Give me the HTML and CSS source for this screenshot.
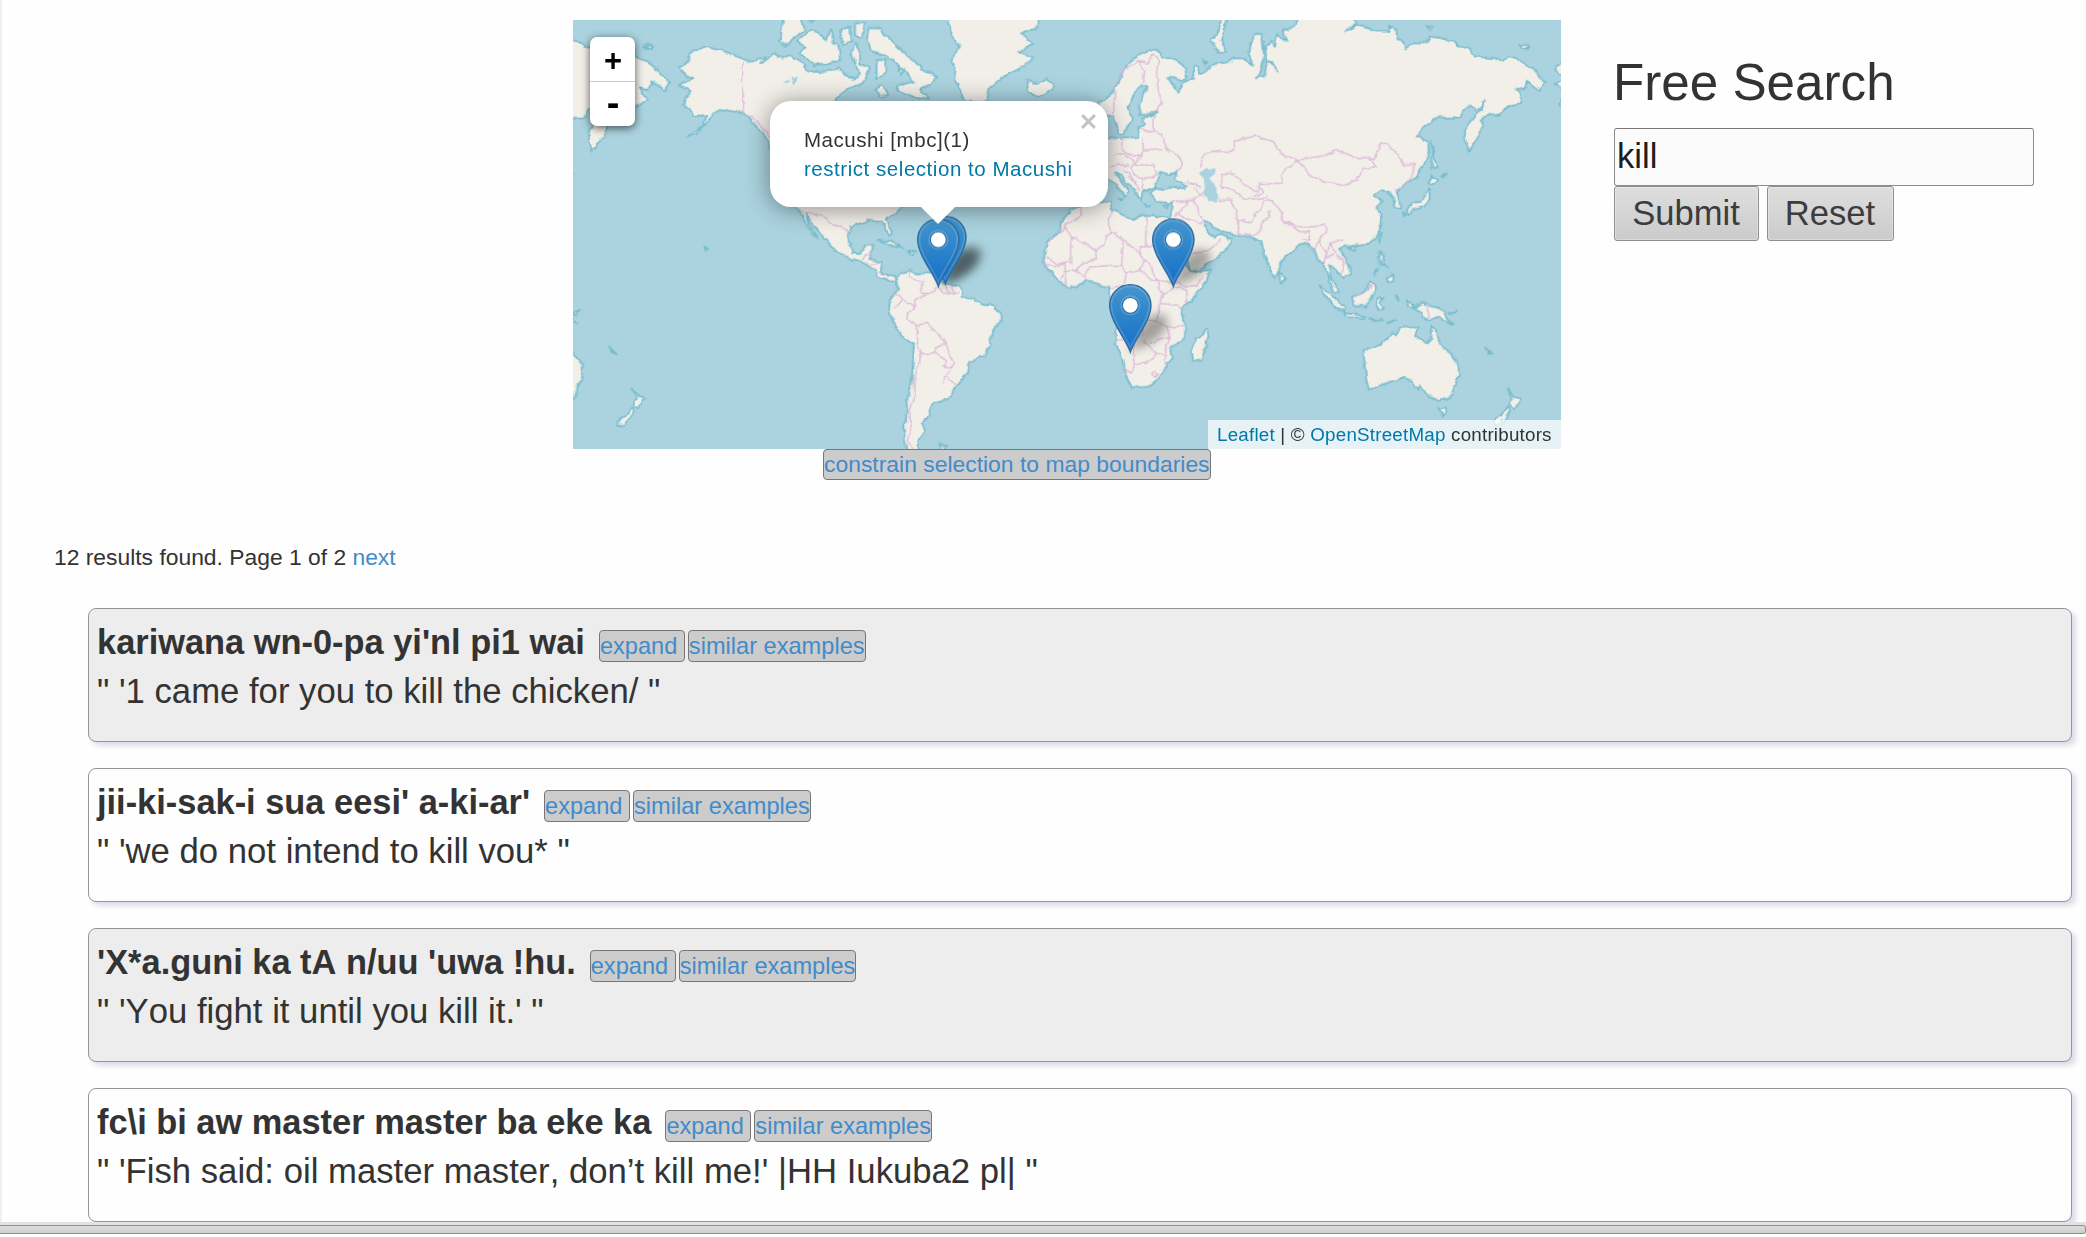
FILE: index.html
```html
<!DOCTYPE html>
<html lang="en">
<head>
<meta charset="utf-8">
<title>Free Search</title>
<link rel="stylesheet" href="styles.css">
</head>
<body>
<main class="page">
  <div class="top">
    <section class="map-column">
      <div class="map">
        <svg class="map-canvas" viewBox="39 30 2964 1287" preserveAspectRatio="none" aria-hidden="true">
          <defs>
            <filter id="rough" filterUnits="userSpaceOnUse" x="-100" y="0" width="3300" height="1350" color-interpolation-filters="sRGB">
              <feTurbulence type="fractalNoise" baseFrequency="0.035" numOctaves="3" seed="4" result="n"/>
              <feDisplacementMap in="SourceGraphic" in2="n" scale="17" xChannelSelector="R" yChannelSelector="G"/>
            </filter>
            <filter id="soft" x="-50%" y="-50%" width="200%" height="200%"><feGaussianBlur stdDeviation="15"/></filter>
            <linearGradient id="pin" x1="0" y1="0" x2="0" y2="1">
              <stop offset="0" stop-color="#4596cd"/><stop offset="1" stop-color="#126fc6"/>
            </linearGradient>
            <g id="world">
              <g class="land">
                <path d="M435 110L480 120 545 145 575 155 615 140 600 160 645 130 665 145 690 135 720 155 740 180 800 185 835 175 855 195 890 205 900 190 875 130 885 100 900 120 900 160 930 175 920 200 900 225 870 230 845 250 830 270 830 420 1060 570 1020 595 1000 610 980 625 993 665 985 672 965 635 925 632 870 650 865 690 880 730 900 732 915 708 940 705 935 728 925 750 965 755 965 785 985 800 1005 795 1012 812 985 815 955 800 945 780 905 755 875 745 840 730 810 710 800 690 770 655 735 612 750 650 773 685 755 670 735 635 715 600 700 580 640 450 625 400 610 370 580 340 560 315 530 305 480 300 460 310 440 340 410 370 380 382 430 345 440 315 400 318 390 295 370 285 375 270 395 240 355 225 400 205 370 190 360 170 385 155 390 130 410 120Z"/>
                <path d="M930 55L960 55 980 80 1010 105 1050 145 1095 180 1130 200 1110 225 1080 235 1105 270 1060 260 1010 240 1020 225 1060 215 1030 180 1000 150 970 130 930 120 920 90Z"/>
                <path d="M740 70L760 60 800 90 810 60 820 95 835 105 840 150 800 160 760 165 720 130 735 110 710 95Z"/>
                <path d="M670 20L720 20 735 60 700 80 680 110 660 95Z"/>
                <path d="M840 60L870 50 875 95 850 105ZM885 40L915 40 905 80 885 75ZM950 150L980 150 975 190 950 210ZM945 240L965 225 985 255 960 260ZM1015 175L1030 180 1022 195ZM735 20L770 20 755 34Z"/>
                <path d="M1160 20L1180 80 1200 110 1175 150 1190 180 1185 210 1205 250 1215 275 1280 275 1290 230 1330 200 1390 170 1420 140 1375 125 1420 100 1380 70 1425 60 1440 20Z"/>
                <path d="M1400 210L1430 220 1460 205 1480 225 1470 245 1430 260 1405 245Z"/>
                <path d="M250 108L270 102 280 110 258 118ZM955 693L990 693 1030 715 1000 710ZM1040 720L1070 727 1060 735ZM433 712L447 718 440 724ZM1135 1305L1160 1308 1145 1318Z"/>
                <path d="M1010 810L1025 785 1050 778 1065 790 1120 790 1150 820 1195 825 1210 860 1250 875 1290 885 1322 905 1322 930 1295 965 1290 1005 1275 1035 1228 1055 1225 1085 1190 1130 1160 1170 1120 1180 1105 1200 1110 1215 1085 1240 1095 1260 1075 1290 1075 1330 1040 1330 1030 1250 1045 1200 1042 1170 1055 1120 1062 1000 1025 980 1000 935 987 905 990 870 1012 840Z"/>
                <g transform="translate(1500 0)">
                  <path d="M118 280L155 250 175 225 190 180 215 150 245 130 270 120 300 125 305 140 345 150 375 175 380 200 365 213 330 200 325 207 345 235 355 245 375 215 400 205 400 170 415 170 420 190 460 165 500 160 520 145 550 145 580 168 565 130 570 100 585 72 605 72 610 110 612 150 600 190 590 205 612 200 620 155 640 155 650 185 645 165 620 150 615 110 630 90 645 110 650 75 680 95 665 60 700 50 712 40 712 20 880 20 890 38 860 65 890 45 960 65 985 65 990 50 1010 60 1010 85 1030 95 1035 115 1060 100 1095 100 1110 80 1150 85 1180 95 1200 110 1230 115 1245 140 1310 145 1330 155 1350 138 1380 150 1410 170 1430 195 1460 215 1440 240 1400 215 1395 240 1370 235 1388 275 1350 290 1320 310 1280 315 1265 330 1270 350 1255 380 1240 400 1225 428 1215 390 1215 360 1235 330 1260 300 1275 275 1250 300 1235 290 1210 300 1200 322 1120 325 1070 380 1105 395 1105 430 1090 470 1060 510 1030 520 1010 550 1020 580 1020 595 1005 590 1000 565 985 545 965 540 945 555 940 560 965 570 945 590 960 610 965 640 955 670 930 700 890 705 870 715 855 705 840 715 845 730 870 770 870 790 850 805 845 795 830 785 810 765 805 790 830 835 835 850 820 845 805 800 795 790 790 755 770 750 760 720 745 700 720 705 690 730 660 755 660 790 645 805 630 780 615 740 605 700 590 690 575 680 540 675 500 670 480 665 460 650 440 635 430 635 440 660 460 680 485 675 515 690 500 715 470 745 430 770 395 785 385 760 365 720 345 670 332 640 330 625 340 580 290 575 270 550 290 540 330 530 375 535 380 525 345 510 350 485 330 495 300 485 285 520 290 535 260 540 250 545 245 570 235 565 220 535 200 520 185 495 165 490 180 510 205 540 195 560 175 530 150 510 135 500 100 480 100 390 150 385 230 385 235 370 235 350 255 345 250 325 290 310 240 315 235 290 260 235 245 225 215 265 205 290 215 330 190 375 175 370 160 320 130 320 115 300Z"/>
                  <path d="M60 590L150 572 155 600 200 620 220 630 240 615 280 615 325 625 335 655 340 680 360 720 380 770 395 785 450 780 440 810 410 850 375 890 365 905 375 930 375 985 330 1015 335 1045 315 1075 290 1110 265 1130 215 1135 205 1110 190 1070 185 1040 165 1000 170 960 165 930 150 850 145 830 125 830 110 820 80 815 50 830 20 832 -5 810 -40 775 -48 750 -40 695 0 660 10 630 30 600Z"/>
                  <path d="M440 955L445 975 425 1050 400 1055 395 1025 405 985 425 975ZM665 790L675 805 665 820 658 808ZM1137 1193L1162 1193 1150 1218Z"/>
                  <path d="M910 1025L960 1005 980 985 1000 970 1010 975 1020 955 1045 950 1075 955 1065 975 1100 1000 1110 990 1115 945 1130 965 1140 1005 1170 1030 1195 1065 1197 1095 1180 1135 1170 1165 1135 1172 1105 1160 1080 1125 1075 1140 1055 1115 1030 1105 990 1115 960 1130 925 1138 920 1120 915 1070Z"/>
                  <path d="M1040 870L1065 890 1085 878 1120 890 1150 905 1165 925 1180 942 1150 930 1130 920 1110 930 1085 920 1085 905 1065 895 1045 890ZM1165 910L1190 897 1175 915ZM875 860L905 850 935 815 945 830 930 870 920 890 885 885ZM778 825L810 850 850 890 850 905 820 885 790 850ZM850 910L880 912 915 922 910 928 860 920ZM925 928L965 930 940 934ZM980 940L1003 927 990 938ZM950 865L975 865 958 878 972 895 955 900 948 890Z"/>
                  <path d="M955 725L968 735 965 760 985 775 960 765ZM980 805L1000 795 1000 815 985 817ZM945 785L955 775 948 793ZM1010 855L1015 870 1008 862ZM1105 520L1115 495 1140 510 1120 522ZM1040 600L1060 583 1085 573 1110 535 1112 565 1095 590 1060 600 1045 612ZM1028 603L1038 610 1034 622ZM1115 395L1122 440 1130 475 1116 478ZM955 680L965 670 960 697ZM868 712L885 712 880 724ZM1145 495L1165 487 1152 499Z"/>
                  <path d="M1340 1135L1360 1158 1383 1163 1362 1195 1350 1185 1355 1165ZM1345 1190L1350 1205 1320 1245 1300 1248 1300 1235 1325 1215ZM1275 1012L1298 1032 1285 1028ZM490 20L475 60 455 95 475 125 500 125 482 95 490 60 505 20ZM1380 112L1405 104 1400 118ZM1100 48L1120 50 1112 60ZM432 152L442 156 438 166ZM250 578L272 588 258 590ZM310 590L328 584 322 595ZM175 566L190 568 180 574Z"/>
                </g>
              </g>
              <g class="lake">
                <path d="M1920 490L1940 475 1967 475 1965 490 1950 505 1968 525 1972 575 1945 573 1932 550 1938 530ZM690 200L715 200 700 225ZM668 215L690 210 680 220Z"/>
              </g>
              <g class="border">
                <path d="M547 145V305L580 325 610 355 635 390M715 605L755 612 800 625 825 645 845 645 865 670M905 755L915 735 935 730M925 770L960 755M955 785L975 795M1050 778L1045 800 1085 820 1085 850 1110 850 1135 830M1000 855L1030 865 1065 890 1070 865 1110 850M1000 895L1030 865M1065 890L1045 905 1040 930 1070 945 1100 940 1135 970 1155 1000 1125 1015 1125 1030 1085 1030 1072 1000 1072 945M1085 1030L1075 1060 1062 1110 1062 1170 1050 1200 1050 1260 1045 1300 1060 1317M1125 1030L1160 1050 1150 1072 1175 1075 1185 1060 1165 1030 1155 1000M1175 1075L1158 1095 1150 1120M1158 1095L1190 1130M1135 830L1150 850 1175 850 1195 850M1160 825L1165 850M1175 825L1178 850"/>
                <g transform="translate(1500 0)">
                  <path d="M160 320L165 230 190 180 235 152 250 180 248 220M235 152L265 160 275 135 295 150 290 185 295 240 305 275 285 310M282 315L282 365 255 365 235 350M282 365L305 375 310 400 330 425 370 450 365 475 350 485M185 385L185 420 215 435 245 440 250 385M250 420L310 415M245 440L225 460 240 465 280 465 290 490 250 510 230 500 210 470 225 460M165 440L190 430 225 455M150 470L180 465 205 465M190 480L210 490 235 540M250 510L245 540M205 500L225 520M380 515L425 530M400 535L430 560M340 575L400 570 430 545M385 570L355 610 340 620M400 570L420 610 430 640M355 610L390 630 425 640M420 450L455 420 490 430 520 420 520 395 585 378 640 395 665 430 715 450 665 490 665 520 600 520 590 545 555 530 520 490 485 490 485 530M420 450L425 470M485 530L510 535 560 570 625 560M475 570L515 570 530 600 530 640 540 670M530 630L570 635 600 600 610 575 635 570M540 670L595 675 610 640 630 600M590 525L610 545 580 560M635 570L660 600 665 630 710 650 770 650 790 640 800 665 770 695 760 720M715 450L800 435 830 420 895 450 925 440 945 450 960 400 980 400 1010 430 1030 465 1062 460 1050 510 1005 545M715 450L750 495 790 515 845 525 890 510 915 475 950 470 925 440M665 630L720 665 750 665 750 690 725 690M775 690L800 730 790 760M800 730L810 700 850 690M810 700L830 730 855 760 845 790M795 745L825 735M1105 880V925M880 860L910 850 935 825"/>
                  <path d="M60 590L65 615 15 650 35 680 105 720 130 705 150 660 148 630 155 600M15 650L15 655 -35 695M35 680L35 760 -10 760 -40 740M105 720L110 745 70 755 50 780 75 800 90 770 185 765 190 690 150 660M260 615V710H240L240 730 190 690M260 710H355M185 765L200 790 240 780 250 750 240 730M240 780L270 810 320 815 350 815 375 830 410 830 430 800M290 810L275 770 250 750M75 800L80 820M50 780L10 785 0 805M10 785L20 760M150 835L190 825 200 790M190 825L180 870 165 890 220 880 250 930 290 930 300 880 305 850 290 810M305 850L330 845 345 830 380 840 380 880M300 880L350 885 365 900M165 990L220 990 250 975 250 930M220 990L225 1060 215 1090 190 1075M225 1060L260 1060 290 1030 315 1035 320 1065M250 995L290 1030M290 930L320 955 370 950M320 955L330 980 300 985 270 1000M330 980L320 1010 315 1035M275 1090L285 1082 293 1092 283 1102ZM400 730L440 725 485 690M-45 765L-15 770 20 760M20 832L15 790"/>
                </g>
              </g>
            </g>
            <g id="marker">
              <path d="M0-1C-12-38-62-95-62-141A62 62 0 0 1 62-141C62-95 12-38 0-1Z" fill="url(#pin)" stroke="#2b699f" stroke-width="4"/>
              <path d="M0-14C-14-50-57-100-57-141A57 57 0 0 1 57-141C57-100 14-50 0-14Z" fill="none" stroke="#fff" stroke-opacity=".16" stroke-width="5"/>
              <circle cy="-141" r="24" fill="#fff" stroke="#2a6fa6" stroke-width="3.5"/>
              <circle cy="-141" r="28" fill="none" stroke="#fff" stroke-opacity=".2" stroke-width="4"/>
            </g>
            <path id="shade" d="M0-2L38-82C62-122 125-120 116-82C108-48 58-12 0-2Z" filter="url(#soft)"/>
          </defs>
          <rect x="39" y="30" width="2964" height="1287" fill="#aad3df"/>
          <g filter="url(#rough)">
            <use href="#world"/>
            <use href="#world" x="-2628"/>
            <use href="#world" x="2628"/>
          </g>
          <g fill="#000" fill-opacity=".33">
            <use href="#shade" x="1135" y="830"/><use href="#shade" x="1150" y="820"/>
            <use href="#shade" x="1835" y="830"/><use href="#shade" x="1706" y="1025"/>
          </g>
          <use href="#marker" x="1156" y="822"/>
          <use href="#marker" x="1135" y="830"/>
          <use href="#marker" x="1840" y="830"/>
          <use href="#marker" x="1711" y="1027"/>
        </svg>
        <div class="zoom"><a class="zoom-in">+</a><a class="zoom-out">-</a></div>
        <div class="popup">
          <div>Macushi [mbc](1)</div>
          <a class="map-link">restrict selection to Macushi</a>
          <svg class="close" viewBox="0 0 16 16"><path d="M2 2L14 14M14 2L2 14"/></svg>
        </div>
        <div class="attribution"><a class="map-link">Leaflet</a> | © <a class="map-link">OpenStreetMap</a> contributors</div>
      </div>
      <a class="chip constrain">constrain selection to map boundaries</a>
    </section>
    <form class="search">
      <h2 class="search-title">Free Search</h2>
      <input class="search-input" type="text" value="kill">
      <div class="search-buttons">
        <button class="button submit" type="button">Submit</button>
        <button class="button reset" type="button">Reset</button>
      </div>
    </form>
  </div>
  <p class="summary">12 results found. Page 1 of 2 <a class="link">next</a></p>
  <div class="results">
    <article class="card odd">
      <div class="card-head"><b class="phrase">kariwana wn-0-pa yi'nl pi1 wai</b><a class="chip">expand&nbsp;</a><a class="chip">similar examples</a></div>
      <div class="gloss">" '1 came for you to kill the chicken/ "</div>
    </article>
    <article class="card">
      <div class="card-head"><b class="phrase">jii-ki-sak-i sua eesi' a-ki-ar'</b><a class="chip">expand&nbsp;</a><a class="chip">similar examples</a></div>
      <div class="gloss">" 'we do not intend to kill vou* "</div>
    </article>
    <article class="card odd">
      <div class="card-head"><b class="phrase">'X*a.guni ka tA n/uu 'uwa !hu.</b><a class="chip">expand&nbsp;</a><a class="chip">similar examples</a></div>
      <div class="gloss">" 'You fight it until you kill it.' "</div>
    </article>
    <article class="card">
      <div class="card-head"><b class="phrase">fc\i bi aw master master ba eke ka</b><a class="chip">expand&nbsp;</a><a class="chip">similar examples</a></div>
      <div class="gloss">" 'Fish said: oil master master, don’t kill me!' |HH Iukuba2 pl| "</div>
    </article>
  </div>
</main>
<footer class="scrollbar"><div class="thumb"></div></footer>
</body>
</html>
```
FILE: styles.css
```css
* { box-sizing: border-box; }
body {
  margin: 0;
  height: 1237px;
  overflow: hidden;
  background: #fefefe;
  color: #333;
  font: 22.85px/32px "Liberation Sans", Arial, sans-serif;
}
.page { height: 1222px; overflow: hidden; border-left: 2px solid #f0f0f0; padding: 20px 0 0 52px; }
.top { display: flex; height: 520px; padding-left: 519px; }
.map-column { width: 988px; display: flex; flex-direction: column; align-items: flex-start; }
.map { position: relative; width: 988px; height: 429px; overflow: hidden; }
.map-canvas { display: block; width: 988px; height: 429px; }
.land { fill: #f2efe9; stroke: #78bccd; stroke-width: 5; stroke-linejoin: round; }
.lake { fill: #aad3df; }
.border { fill: none; stroke: #d9afd6; stroke-opacity: .85; stroke-width: 4; stroke-linejoin: round; }
.zoom {
  position: absolute; left: 17px; top: 17px; width: 45px; height: 89px;
  display: flex; flex-direction: column;
  background: #fff; border-radius: 7px; box-shadow: 0 2px 9px rgba(0,0,0,.65);
  color: #000; font-weight: bold; text-align: center;
}
.zoom-in { height: 45px; border-bottom: 1px solid #ccc; font-size: 31px; line-height: 47px; padding-left: 1px; }
.zoom-out { font-size: 38px; line-height: 42px; padding-left: 1px; }
.popup {
  position: absolute; left: 197px; top: 81px; width: 338px; height: 106px;
  padding: 24px 0 0 34px; border-radius: 21px; background: #fff;
  box-shadow: 0 2px 24px rgba(0,0,0,.42);
  font-size: 20.5px; line-height: 29px; letter-spacing: .54px; white-space: nowrap;
}
.popup::after {
  content: ""; position: absolute; left: 150px; top: 105px;
  border: solid transparent; border-width: 18px 18px 0; border-top-color: #fff;
}
.close { position: absolute; right: 11px; top: 12px; width: 17px; height: 17px; fill: none; stroke: #c3c3c3; stroke-width: 2.7; }
.map-link { color: #0078a8; }
.attribution {
  position: absolute; right: 0; bottom: 0; width: 353px; height: 29px; padding-left: 9px;
  background: rgba(255,255,255,.7); font-size: 18.8px; line-height: 29px; letter-spacing: .21px; white-space: nowrap;
}
.chip {
  display: block; height: 32px; margin-right: 3px; border: 1px solid #777; border-radius: 4px;
  background: #ccc; color: #428bca; font-size: 23.6px; line-height: 31px; white-space: nowrap;
}
.constrain { width: 388px; height: 31px; margin-left: 250px; font-size: 22.9px; line-height: 29px; }
.search { margin-left: 53px; width: 420px; }
.search-title { margin: 0 0 0 -1px; padding-top: 35px; height: 108px; font-size: 51.2px; line-height: 56px; font-weight: normal; white-space: nowrap; }
.search-input {
  display: block; width: 420px; height: 58px; padding: 0 0 1px 2px; margin: 0;
  border: 1px solid #8c8c8c; border-top-color: #777; border-radius: 3px; background: #fbfbfb;
  color: #1c1c1c; font: 34.6px "Liberation Sans", Arial, sans-serif;
}
.search-buttons { display: flex; gap: 8px; }
.button {
  height: 55px; padding: 0 1px 0 0; border: 1px solid #8f8f8f; border-radius: 3px;
  background: linear-gradient(#dedede, #cbcbcb); box-shadow: inset 0 0 0 1px rgba(255,255,255,.3);
  color: #3c3c3c; font: 34.6px "Liberation Sans", Arial, sans-serif;
}
.submit { width: 145px; }
.reset { width: 127px; }
.summary { margin: 0; padding-top: 1px; height: 68px; }
.link { color: #428bca; }
.results { display: flex; flex-direction: column; gap: 26px; padding: 0 14px 0 34px; }
.card {
  height: 134px; flex: none; padding: 8px 8px 0; border: 1px solid #959595; border-radius: 8px;
  background: #fefefe; box-shadow: 4px 4px 5px #dcdcec; font-size: 34.7px; white-space: nowrap;
  font-kerning: none;
}
.odd { background: #ededed; }
.card-head { display: flex; align-items: center; height: 51px; line-height: 50px; }
.card-head .chip { margin-top: 6px; }
.phrase { margin-right: 14px; height: 51px; font-size: 34.4px; }
.gloss { line-height: 47px; }
.scrollbar { height: 15px; padding-top: 3px; background: linear-gradient(#e3e3e3 12px, #fff 12px); }
.thumb { height: 9px; margin-left: -4px; border: 1px solid #8e8e8e; border-radius: 3px; background: linear-gradient(#dcdcdc, #d0d0d0); }
```
